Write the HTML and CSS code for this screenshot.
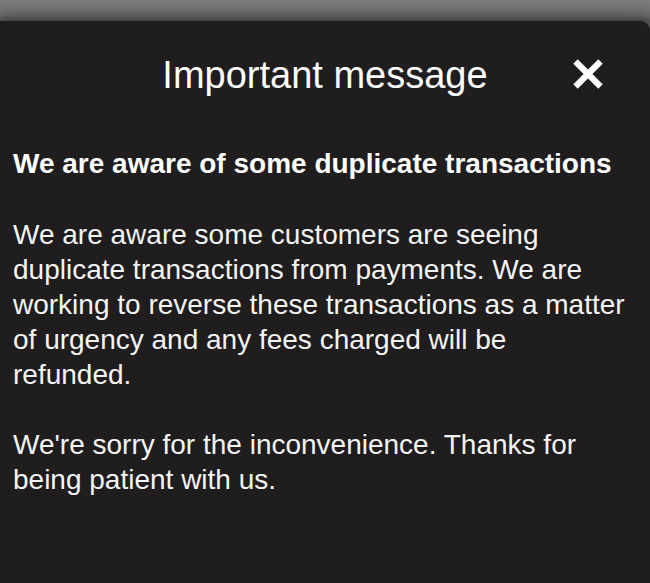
FILE: index.html
```html
<!DOCTYPE html>
<html lang="en">
<head>
<meta charset="utf-8">
<title>Important message</title>
<link rel="stylesheet" href="styles.css">
</head>
<body>
<div class="sheet">
  <header class="sheet-header">
    <span></span>
    <h1 class="sheet-title">Important message</h1>
    <button class="close" aria-label="Close">
      <svg viewBox="0 0 32 30" width="32" height="30"><path d="M3.5 2.5 L28.5 27.5 M28.5 2.5 L3.5 27.5" stroke="#fff" stroke-width="6.2" stroke-linecap="butt" fill="none"/></svg>
    </button>
  </header>
  <section class="content">
    <h2 class="headline">We are aware of some duplicate transactions</h2>
    <p class="para">We are aware some customers are seeing duplicate transactions from payments. We are working to reverse these transactions as a matter of urgency and any fees charged will be refunded.</p>
    <p class="para">We're sorry for the inconvenience. Thanks for being patient with us.</p>
  </section>
</div>
</body>
</html>
```
FILE: styles.css
```css
html, body {
  margin: 0;
  padding: 0;
}
body {
  background: linear-gradient(#7d7d7d, #6e6e6e 14px, #5a5a5a 21px);
  height: 583px;
  overflow: hidden;
  font-family: "Liberation Sans", Arial, sans-serif;
  color: #f4f4f4;
}
.sheet {
  margin-top: 21px;
  height: 562px;
  background: #1f1d1e;
  border-radius: 0 10px 0 0;
  box-shadow: 0 -4px 14px rgba(0, 0, 0, 0.35);
}
.sheet-header {
  display: grid;
  grid-template-columns: 1fr auto 1fr;
  align-items: center;
  padding-top: 33px;
}
.sheet-title {
  margin: 0;
  font-weight: normal;
  font-size: 38px;
  line-height: 42px;
  color: #ffffff;
}
.close {
  justify-self: end;
  margin-right: 46px;
  margin-top: -2px;
  padding: 0;
  border: 0;
  background: none;
  display: flex;
}
.content {
  padding: 52px 21px 0 13px;
}
.headline {
  margin: 0;
  font-size: 28px;
  line-height: 32px;
  font-weight: bold;
  color: #ffffff;
  white-space: nowrap;
}
.para {
  margin: 37px 0 0 0;
  font-size: 28px;
  line-height: 35px;
}
.para + .para {
  margin-top: 35px;
}
```
